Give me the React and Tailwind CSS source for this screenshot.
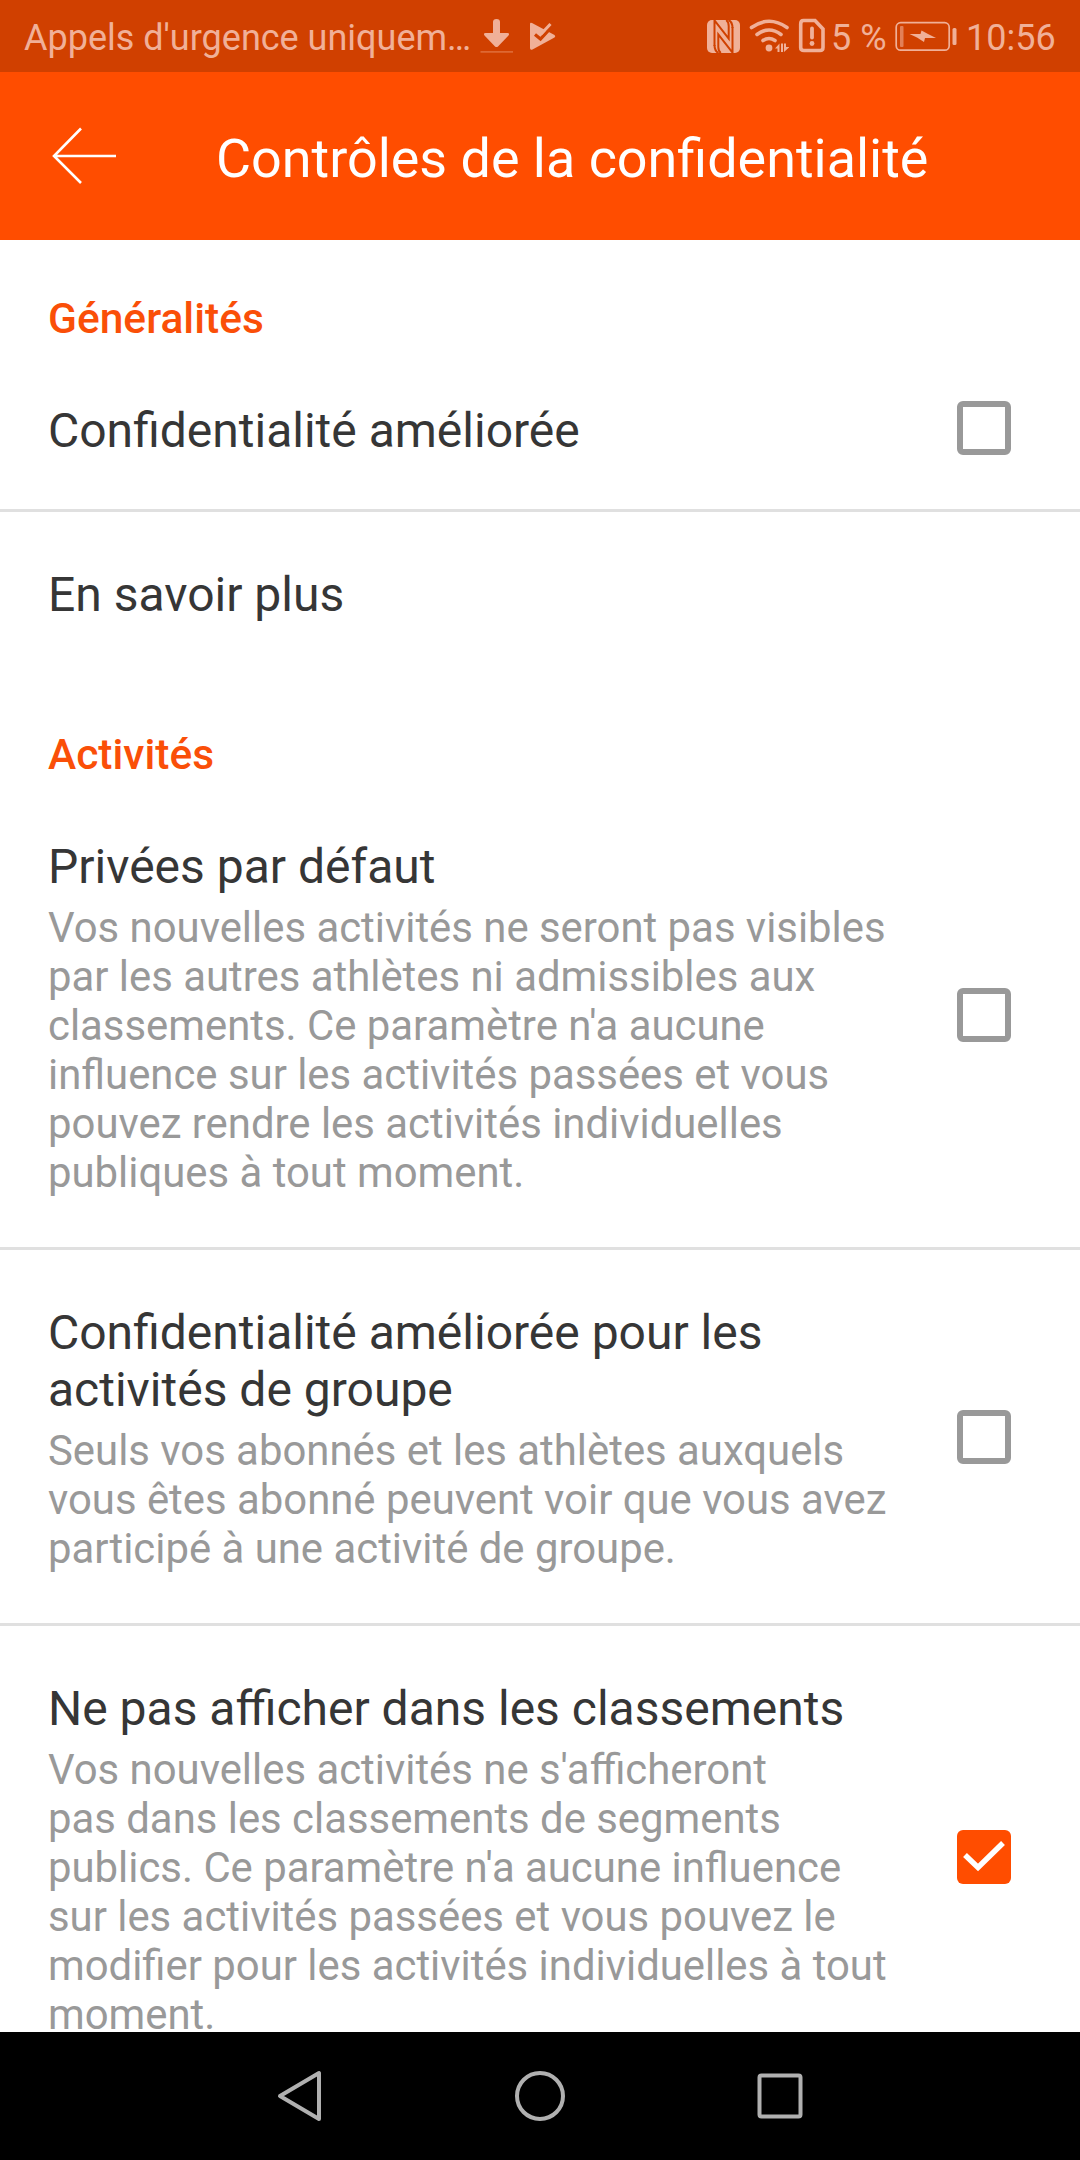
const sections = [
  {
    title: 'Généralités',
    items: [
      { id: 'enhanced', label: 'Confidentialité améliorée', checked: false, rowClass: 'h-[165px]', textClass: 'pt-[55px]' },
      { id: 'learn-more', label: 'En savoir plus', rowClass: 'h-[164px]', textClass: 'pt-[54px]' },
    ],
  },
  {
    title: 'Activités',
    items: [
      {
        id: 'private-default',
        label: 'Privées par défaut',
        lines: [
          'Vos nouvelles activités ne seront pas visibles',
          'par les autres athlètes ni admissibles aux',
          "classements. Ce paramètre n'a aucune",
          'influence sur les activités passées et vous',
          'pouvez rendre les activités individuelles',
          'publiques à tout moment.',
        ],
        checked: false,
        rowClass: 'h-[467px]',
        textClass: 'pt-[55px]',
      },
      {
        id: 'group-privacy',
        label: 'Confidentialité améliorée pour les activités de groupe',
        lines: [
          'Seuls vos abonnés et les athlètes auxquels',
          'vous êtes abonné peuvent voir que vous avez',
          'participé à une activité de groupe.',
        ],
        checked: false,
        rowClass: 'h-[376px]',
        textClass: 'pt-[54px]',
      },
      {
        id: 'hide-leaderboards',
        label: 'Ne pas afficher dans les classements',
        lines: [
          "Vos nouvelles activités ne s'afficheront",
          'pas dans les classements de segments',
          "publics. Ce paramètre n'a aucune influence",
          'sur les activités passées et vous pouvez le',
          'modifier pour les activités individuelles à tout',
          'moment.',
        ],
        checked: true,
        rowClass: 'h-[462px]',
        textClass: 'pt-[54px]',
      },
    ],
  },
];

function DownloadIcon() {
  return (
    <svg className="h-[72px] w-[34px] shrink-0" viewBox="480 0 34 72" aria-hidden="true">
      <path d="M493 22q0-3 3.500-3t3.500 3v11h7.500q2.500 0 1 2.500l-10.500 11q-1.500 1.200-3 0L484.500 35.500q-1.500-2.500 1-2.500H493z" fill="#f0b098" />
      <path d="M480.500 51.800h32.500" stroke="#de6833" strokeWidth="1.800" />
    </svg>
  );
}

function PlayCheckIcon() {
  return (
    <svg className="ml-4 h-[72px] w-[26px] shrink-0" viewBox="530 0 26 72" aria-hidden="true">
      <path d="M530 24q0-2 2-1l22.500 12q1.500 1 0 2.500l-22 12q-2.500 1-2.500-1.500z" fill="#f0b098" />
      <path d="M535 34.500l5.500 4.500 13-14" fill="none" stroke="#d04000" strokeWidth="3.200" />
      <path d="M541 34l9.500-10" stroke="#f0b098" strokeWidth="3" />
    </svg>
  );
}

function NfcIcon() {
  return (
    <svg className="h-[72px] w-[34px] shrink-0" viewBox="706 0 34 72" aria-hidden="true">
      <rect x="707" y="20" width="33" height="33" rx="5" fill="#f0b098" />
      <g fill="none" stroke="#d04000" strokeWidth="2">
        <path d="M714.500 46V20.500L728.700 38.500V26q0-4-2.500-6" />
        <path d="M732.500 27V52.500L718.300 34.500V47q0 4 2.500 6" />
        <path d="M714.500 45q0 6 4 8M732.500 28q0-6-4-8" />
      </g>
    </svg>
  );
}

function WifiIcon() {
  return (
    <svg className="ml-[9px] h-[72px] w-[40px] shrink-0" viewBox="749 0 40 72" aria-hidden="true">
      <g fill="none" stroke="#f0b098" strokeWidth="3.600" strokeLinecap="round">
        <path d="M751.500 27.500Q769 15 787 27.500" />
        <path d="M757 34.500Q769 25.500 781 34.500" />
        <path d="M763 40.500Q769 36.500 775 40.500" />
      </g>
      <circle cx="769" cy="48" r="3.400" fill="#f0b098" />
      <path d="M775 48.500l4.500-5V52h-2v-3.500zM781 43.500h2V52h-2zM784 52v-8.500h2v3.500h3.500z" fill="#f0b098" />
    </svg>
  );
}

function SimAlertIcon() {
  return (
    <svg className="ml-[9px] h-[72px] w-[28px] shrink-0" viewBox="798 0 28 72" aria-hidden="true">
      <path d="M803.500 20.500H815l8 8.500v18.500q0 3-3 3h-16q-3.300 0-3.300-3V24q0-3.500 2.800-3.500z" fill="none" stroke="#f0b098" strokeWidth="3.600" />
      <path d="M812 28.500v9" stroke="#f0b098" strokeWidth="3.800" strokeLinecap="round" />
      <circle cx="812" cy="43.500" r="2.400" fill="#f0b098" />
    </svg>
  );
}

function BatteryIcon() {
  return (
    <svg className="h-[72px] w-[64px] shrink-0" viewBox="894 0 64 72" aria-hidden="true">
      <rect x="896.200" y="22.700" width="53" height="27.500" rx="4.500" fill="none" stroke="#f0b098" strokeWidth="1.700" />
      <rect x="900" y="26" width="3.500" height="21" rx="1" fill="#e28058" />
      <path d="M909.500 34h11l1-3.500 6.500 3.500 8 4h-11l-1 4-7-4.500z" fill="#f0b098" />
      <rect x="952.500" y="28" width="4" height="17" rx="1.500" fill="#f0b098" />
    </svg>
  );
}

function StatusBar() {
  return (
    <div className="flex h-[72px] items-start bg-[#d04000] text-[36px] leading-[76px] text-[#f0b098]">
      <span className="w-[456px] shrink-0 whitespace-nowrap pl-[24px]">Appels d'urgence uniquem…</span>
      <div className="ml-[24px] flex">
        <DownloadIcon />
        <PlayCheckIcon />
      </div>
      <div className="ml-auto flex pr-[24px]">
        <NfcIcon />
        <WifiIcon />
        <SimAlertIcon />
        <span className="w-[68px] whitespace-nowrap pl-[5px]">5 %</span>
        <BatteryIcon />
        <span className="w-[98px] whitespace-nowrap pl-[8px]">10:56</span>
      </div>
    </div>
  );
}

function AppHeader() {
  return (
    <header className="flex h-[168px] items-center bg-[#ff4d00] text-white">
      <button className="ml-[50px] h-[72px] w-[72px]" aria-label="Retour">
        <svg viewBox="50 120 72 72" fill="none" stroke="#fff" strokeWidth="2.600" aria-hidden="true">
          <path d="M116 156H54M81 128.500L54 156l27 27" />
        </svg>
      </button>
      <h1 className="ml-[94px] pt-[6px] text-[53.900px] leading-[64px]">Contrôles de la confidentialité</h1>
    </header>
  );
}

function Checkbox({ checked }) {
  if (!checked) {
    return <span role="checkbox" aria-checked="false" className="h-[54px] w-[54px] shrink-0 rounded-[6px] border-[6px] border-[#999999]" />;
  }
  return (
    <span role="checkbox" aria-checked="true" className="h-[54px] w-[54px] shrink-0 rounded-[6px] bg-[#ff4d00]">
      <svg viewBox="0 0 54 54" fill="none" stroke="#fff" strokeWidth="5.500" aria-hidden="true">
        <path d="M8 25l13 12.500L46 13" />
      </svg>
    </span>
  );
}

function SettingRow({ item }) {
  return (
    <div className={`flex items-center justify-between pl-[48px] pr-[69px] ${item.rowClass}`}>
      <div className={`w-[850px] shrink-0 self-start ${item.textClass}`}>
        <p className="text-[48px] leading-[57px] text-[#363636]">{item.label}</p>
        {item.lines && (
          <p className="mt-[8px] text-[41.860px] leading-[49px] text-[#999999]">
            {item.lines.map((line) => (
              <span key={line} className="block whitespace-nowrap">{line}</span>
            ))}
          </p>
        )}
      </div>
      {item.checked !== undefined && <Checkbox checked={item.checked} />}
    </div>
  );
}

function NavBar() {
  return (
    <nav className="flex h-[128px] shrink-0 items-center justify-center gap-[180px] bg-black">
      <svg className="h-[60px] w-[60px]" viewBox="0 0 60 60" fill="none" stroke="#b0b0b0" strokeWidth="4" strokeLinejoin="round" aria-label="Retour">
        <path d="M49 7v46L10 30z" />
      </svg>
      <svg className="h-[60px] w-[60px]" viewBox="0 0 60 60" fill="none" stroke="#b0b0b0" strokeWidth="4" aria-label="Accueil">
        <circle cx="30" cy="30" r="23" />
      </svg>
      <svg className="h-[60px] w-[60px]" viewBox="0 0 60 60" fill="none" stroke="#b0b0b0" strokeWidth="4" aria-label="Récents">
        <rect x="9.500" y="9.500" width="41" height="41" rx="2" />
      </svg>
    </nav>
  );
}

export default function App() {
  return (
    <div className="flex h-[2160px] w-[1080px] flex-col overflow-hidden bg-white font-['Roboto',sans-serif]">
      <StatusBar />
      <AppHeader />
      <main className="min-h-0 flex-1 overflow-hidden">
        {sections.map((section) => (
          <section key={section.title}>
            <h2 className="px-[48px] pt-[54px] pb-1 text-[42.500px] font-medium leading-[49px] text-[#fa4f08]">{section.title}</h2>
            <div className="divide-y-[3px] divide-[#e0e0e0]">
              {section.items.map((item) => (
                <SettingRow key={item.id} item={item} />
              ))}
            </div>
          </section>
        ))}
      </main>
      <NavBar />
    </div>
  );
}
